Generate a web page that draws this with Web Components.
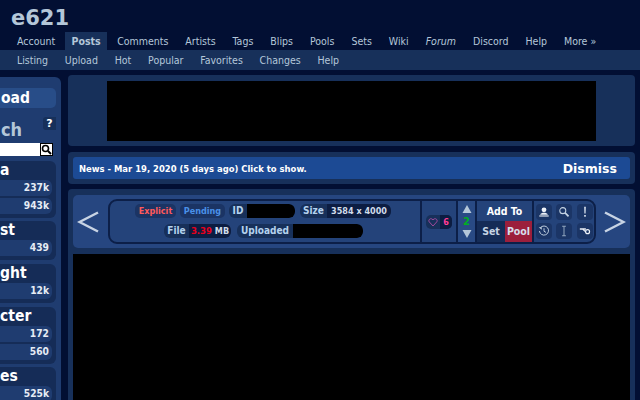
<!DOCTYPE html>
<html>
<head>
<meta charset="utf-8">
<style>
html,body{margin:0;padding:0;height:400px;overflow:hidden;background:#020f33;font-family:"DejaVu Sans Condensed","DejaVu Sans",Verdana,sans-serif;color:#b4c7d9}
</style>
</head>
<body>
<e6-page>
  <e6-header slot="header"></e6-header>
  <e6-sidebar slot="side">
    <side-button>oad</side-button>
    <side-search></side-search>
    <side-box title="a"><tag-row>237k</tag-row><tag-row>943k</tag-row></side-box>
    <side-box title="st"><tag-row>439</tag-row></side-box>
    <side-box title="ght" style="margin-top:1px"><tag-row>12k</tag-row></side-box>
    <side-box title="cter" style="margin-top:1px"><tag-row>172</tag-row><tag-row>560</tag-row></side-box>
    <side-box title="es"><tag-row>525k</tag-row></side-box>
  </e6-sidebar>
  <ad-panel slot="main"></ad-panel>
  <news-panel slot="main"></news-panel>
  <post-panel slot="main">
    <post-toolbar></post-toolbar>
  </post-panel>
</e6-page>

<script>
function make(name, html){
  customElements.define(name, class extends HTMLElement{
    connectedCallback(){
      if(this.shadowRoot) return
      this.attachShadow({mode:'open'})
      this.shadowRoot.innerHTML = typeof html=='function' ? html(this) : html
    }
  })
}

make('e6-page',`<style>
:host{display:block;height:400px;overflow:hidden}
.body{display:flex;align-items:flex-start;padding-top:5px;gap:7px}
.side{flex:none;width:61px;padding-top:2px}
.main{flex:none;width:567px;display:flex;flex-direction:column;gap:6px}
</style>
<slot name="header"></slot>
<div class="body"><div class="side"><slot name="side"></slot></div><div class="main"><slot name="main"></slot></div></div>`)

make('e6-header',`<style>
:host{display:block}
.logo{height:32px;box-sizing:border-box;padding:4px 0 0 11px;font:bold 21px/28px "DejaVu Sans",Verdana,sans-serif;color:#b4c7d9}
nav{display:flex;height:18px;padding-left:8.5px;font-size:10.5px;line-height:19px;white-space:nowrap}
nav span{padding:0 8.5px;color:#b4c7d9}
nav .on{background:#17305a;font-weight:bold;padding:0;margin:0 1.5px;width:42px;text-align:center}
nav i{font-style:italic}
.sub{display:flex;height:20px;padding-left:8.5px;background:#17305a;font-size:10.5px;line-height:20px;white-space:nowrap}
.sub span{padding:0 8.4px;color:#b4c7d9}
</style>
<div class="logo">e621</div>
<nav><span>Account</span><span class="on">Posts</span><span>Comments</span><span>Artists</span><span>Tags</span><span>Blips</span><span>Pools</span><span>Sets</span><span>Wiki</span><span><i>Forum</i></span><span>Discord</span><span>Help</span><span>More »</span></nav>
<div class="sub"><span>Listing</span><span>Upload</span><span>Hot</span><span>Popular</span><span>Favorites</span><span>Changes</span><span>Help</span></div>`)

make('e6-sidebar',`<style>
:host{display:block;background:#1f3c70;border-radius:0 6px 0 0;padding:11px 5px 0 0;height:330px;box-sizing:border-box}
.w{display:flex;flex-direction:column;gap:3px}
</style><div class="w"><slot></slot></div>`)

make('side-button',`<style>
:host{display:block;height:20px;background:#284d88;border-radius:0 5px 5px 0;font:bold 15.5px/20px "DejaVu Sans Condensed","DejaVu Sans",sans-serif;color:#fff;padding-left:1px;margin-bottom:6px}
</style><slot></slot>`)

make('side-search',`<style>
:host{display:block;position:relative;height:41px}
.t{font:bold 18px/26px "DejaVu Sans Condensed","DejaVu Sans",sans-serif;color:#b4c7d9;padding-left:1px}
.q{position:absolute;right:0;top:0;width:13px;height:13px;background:#17305a;border-radius:3px 0 0 3px;font:bold 11px/13px "DejaVu Sans",sans-serif;color:#fff;text-align:center}
.row{display:flex;height:13px}
.in{width:40px;background:#fff}
.btn{width:13px;height:13px;background:#fff;box-sizing:border-box;border:1px solid #000;display:flex;align-items:center;justify-content:center}
</style>
<div class="t">ch</div><div class="q">?</div>
<div class="row"><div class="in"></div><div class="btn"><svg width="11" height="11" viewBox="0 0 11 11"><circle cx="4.5" cy="4.5" r="3" fill="none" stroke="#000" stroke-width="1.6"/><path d="M7 7l3 3" stroke="#000" stroke-width="2"/></svg></div></div>`)

make('side-box',el=>`<style>
:host{display:block;background:#152c57;border-radius:0 6px 6px 0;padding:0 4px 4px 0}
.t{height:19px;font:bold 15.5px/19px "DejaVu Sans Condensed","DejaVu Sans",sans-serif;color:#fff}
.l{display:flex;flex-direction:column;gap:2px}
</style>
<div class="t">${el.getAttribute('title')}</div><div class="l"><slot></slot></div>`)

make('tag-row',`<style>
:host{display:block;height:16px;background:#1f3c70;border-radius:0 6px 6px 0;text-align:right;font:bold 10.2px/16px "DejaVu Sans Condensed","DejaVu Sans",sans-serif;color:#e6ecf5;padding-right:3px}
</style><slot></slot>`)

make('ad-panel',`<style>
:host{display:flex;justify-content:center;height:71px;box-sizing:border-box;padding:6px 0;background:#17305a;border-radius:4px}
div{width:489px;height:60px;background:#000}
</style><div></div>`)

make('news-panel',`<style>
:host{display:block;background:#17305a;border-radius:4px;padding:5px;height:32px;box-sizing:border-box}
.b{display:flex;justify-content:space-between;align-items:center;height:22px;background:#1c4a94;border-radius:3px;padding:0 13px 0 6px;color:#fff;font-weight:bold}
.n{font-size:9.4px}
.d{font:bold 12.5px "DejaVu Sans",sans-serif}
</style><div class="b"><span class="n">News - Mar 19, 2020 (5 days ago) Click to show.</span><span class="d">Dismiss</span></div>`)

make('post-panel',`<style>
:host{display:block;background:#17305a;border-radius:4px 4px 0 0;padding:6px 5px 0;height:240px;box-sizing:border-box;margin-top:-1px}
.img{height:150px;background:#000;margin-top:6px}
</style><slot></slot><div class="img"></div>`)

const ico={
 user:'<circle cx="7" cy="4.500" r="2.800" fill="#eef2f8"/><path d="M2.500 10.200C3 8.500 5 7.800 7 7.800s4 .7 4.500 2.400z" fill="#eef2f8"/><rect x="1.500" y="11" width="11" height="1.300" fill="#eef2f8"/>',
 mag:'<circle cx="5.600" cy="5.400" r="3.500" fill="none" stroke="#c6d4e4" stroke-width="1.200"/><path d="M8.300 8.100l4 4" stroke="#c6d4e4" stroke-width="2"/>',
 bang:'<path d="M6 .8h2l-.3 8H6.300z" fill="#d2dcea"/><rect x="6" y="10.500" width="2" height="2" fill="#d2dcea"/>',
 hist:'<path d="M2.800 3.200A5.300 5.300 0 1 1 1.700 7" fill="none" stroke="#c6d4e4" stroke-width="1.100"/><path d="M.8 2.600h3.600v3z" fill="#c6d4e4"/><path d="M7 3.800V7.300L9.300 8.600" fill="none" stroke="#c6d4e4" stroke-width="1.100"/>',
 ibeam:'<path d="M4.800 1.500h4.400M4.800 12.500h4.400M7 1.500v11" fill="none" stroke="#8fa4bd" stroke-width="1.200"/>',
 key:'<path d="M1 4.700h7" stroke="#eef2f8" stroke-width="1.600"/><circle cx="10" cy="7.800" r="2.300" fill="none" stroke="#eef2f8" stroke-width="1.400"/><path d="M4.500 5l3.300 3" stroke="#eef2f8" stroke-width="1.300"/>'
}

make('icon-btn',el=>`<style>
:host{display:flex;align-items:center;justify-content:center;width:16px;height:16px;background:#1b3566;border-radius:4px}
</style><svg width="12" height="12" viewBox="0 0 14 14">${ico[el.getAttribute('i')]}</svg>`)

make('info-pill',el=>`<style>
:host{display:flex;height:14px;width:${el.getAttribute('w')}px;flex:none;border-radius:6px;background:#17305a;font:bold 10px/14px "DejaVu Sans Condensed","DejaVu Sans",sans-serif;color:#b4d2ee;overflow:hidden}
.l{flex:none;width:${el.getAttribute('lw')}px;text-align:center;white-space:nowrap}
.v{flex:1;background:#0c1d42;text-align:center;color:#d0dcea;font-size:9px;white-space:nowrap;border-radius:0 6px 6px 0}
.k{background:#000}
</style><span class="l"><slot name="l"></slot></span><span class="v ${el.hasAttribute('k')?'k':''}"><slot></slot></span>`)

make('post-toolbar',`<style>
:host{display:flex;align-items:center;height:53px;background:#264680;border-radius:5px;font:bold 9px/14px "DejaVu Sans Condensed","DejaVu Sans",sans-serif}
.arrow{flex:none;width:35px;display:flex}
.box{flex:none;width:488px;height:45px;box-sizing:border-box;border:2px solid #0c1f48;border-radius:9px;display:flex;overflow:hidden;background:#24437a}
.info{flex:none;width:310px;display:flex;flex-direction:column;padding-top:3px;gap:6px}
.r{display:flex;align-items:center}
.r1{padding-left:25px;gap:4px}
.r2{padding-left:54px;gap:6px}
.bd{background:#1b3464;padding:0;width:41px;text-align:center;border-radius:5px;height:14px}
.ex{color:#ff5a5a}
.pe{color:#4a90e8;width:45px}
.c{flex:none;box-sizing:border-box;border-left:2px solid #0c1f48;display:flex;align-items:center;justify-content:center}
.fav{width:36px}
.hp{display:flex;width:26px;height:14px;border-radius:5px;overflow:hidden;background:#17305a}
.hp span{display:flex;align-items:center;justify-content:center;width:14px}
.hp b{flex:1;background:#0c1d42;color:#ff3c96;text-align:center;line-height:14px}
.vote{width:19px;background:#294a84;flex-direction:column;color:#00b020;font-size:11px}
.add{width:57px;flex-direction:column}
.add .h{height:20px;line-height:20px;color:#fff;font-size:10.5px}
.add .f{display:flex;width:100%;flex:1}
.add .f span{width:28px;text-align:center;line-height:21px;font-size:10.5px;background:#152c57;color:#c6d4e4}
.add .f .p{width:27px;background:#9c1f3c;color:#d6dfec}
.icons{flex:1;display:grid;grid-template-columns:repeat(3,16px);grid-auto-rows:16px;gap:3px 4.500px;align-content:center;justify-content:center}
</style>
<div class="arrow" style="padding-left:4px;box-sizing:border-box"><svg width="22" height="24" viewBox="0 0 22 24"><path d="M21 2.500L2.500 12 21 21.500" fill="none" stroke="#c8d4e4" stroke-width="2.500"/></svg></div>
<div class="box">
  <div class="info">
    <div class="r r1"><span class="bd ex">Explicit</span><span class="bd pe">Pending</span>
      <info-pill k w="66" lw="18"><span slot="l">ID</span></info-pill>
      <info-pill w="91" lw="27" style="margin-left:1px"><span slot="l">Size</span>3584 x 4000</info-pill></div>
    <div class="r r2">
      <info-pill w="67" lw="25"><span slot="l">File</span><span style="color:#e8001c;font-size:9.500px">3.39</span> MB</info-pill>
      <info-pill k w="126" lw="56"><span slot="l">Uploaded</span></info-pill></div>
  </div>
  <div class="c fav"><div class="hp"><span><svg width="10" height="10" viewBox="0 0 10 10"><path d="M5 9L1.200 4.800C-.2 2.800 2.800.2 5 2.800 7.200.2 10.200 2.800 8.800 4.800z" fill="none" stroke="#a04a9c"/></svg></span><b>6</b></div></div>
  <div class="c vote"><svg width="10" height="8" viewBox="0 0 10 8"><path d="M5 0l4.500 8h-9z" fill="#b4c7d9"/></svg><span style="line-height:17px">2</span><svg width="10" height="8" viewBox="0 0 10 8"><path d="M5 8L.5 0h9z" fill="#b4c7d9"/></svg></div>
  <div class="c add"><div class="h">Add To</div><div class="f"><span>Set</span><span class="p">Pool</span></div></div>
  <div class="c icons"><icon-btn i="user"></icon-btn><icon-btn i="mag"></icon-btn><icon-btn i="bang"></icon-btn><icon-btn i="hist"></icon-btn><icon-btn i="ibeam"></icon-btn><icon-btn i="key"></icon-btn></div>
</div>
<div class="arrow" style="padding-left:8px;box-sizing:border-box"><svg width="22" height="24" viewBox="0 0 22 24"><path d="M1 2.500L19.500 12 1 21.500" fill="none" stroke="#c8d4e4" stroke-width="2.500"/></svg></div>`)
</script>
</body>
</html>
